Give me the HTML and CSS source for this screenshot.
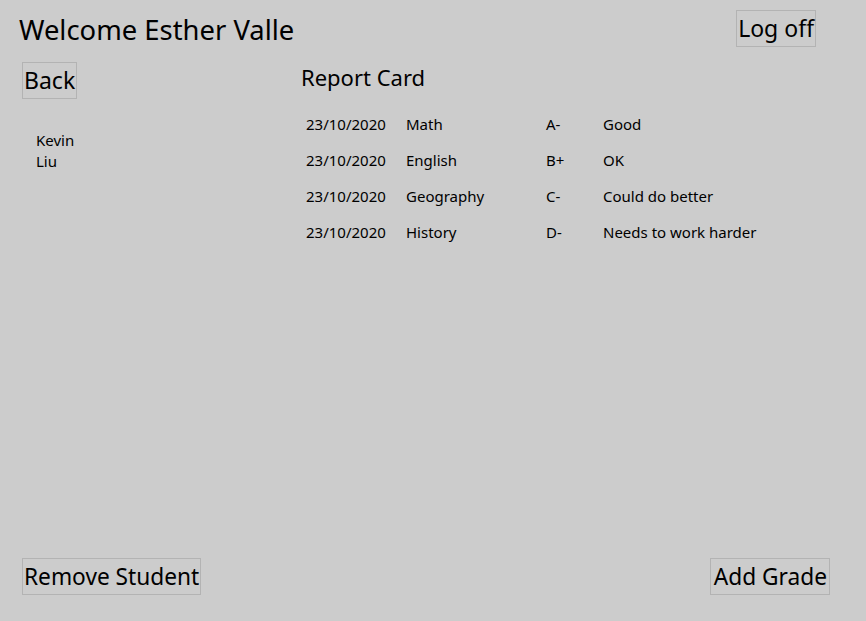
FILE: index.html
```html
<!DOCTYPE html>
<html>
<head>
<meta charset="utf-8">
<link rel="stylesheet" href="styles.css">
</head>
<body>
<div class="page">
  <header class="header">
    <h1 class="title">Welcome Esther Valle</h1>
    <button class="btn btn-logoff">Log off</button>
  </header>
  <main class="main">
    <aside class="side">
      <button class="btn">Back</button>
      <div class="student">Kevin<br>Liu</div>
    </aside>
    <section class="report">
      <h2 class="report-title">Report Card</h2>
      <div class="grades">
        <div class="row"><span class="c-date">23/10/2020</span><span class="c-subj">Math</span><span class="c-grade">A-</span><span class="c-note">Good</span></div>
        <div class="row"><span class="c-date">23/10/2020</span><span class="c-subj">English</span><span class="c-grade">B+</span><span class="c-note">OK</span></div>
        <div class="row"><span class="c-date">23/10/2020</span><span class="c-subj">Geography</span><span class="c-grade">C-</span><span class="c-note">Could do better</span></div>
        <div class="row"><span class="c-date">23/10/2020</span><span class="c-subj">History</span><span class="c-grade">D-</span><span class="c-note">Needs to work harder</span></div>
      </div>
    </section>
  </main>
  <footer class="footer">
    <button class="btn">Remove Student</button>
    <button class="btn btn-add">Add Grade</button>
  </footer>
</div>
</body>
</html>
```

FILE: styles.css
```css
html, body {
  margin: 0;
  padding: 0;
  background: #cccccc;
}
body {
  font-family: "Noto Sans", "Open Sans", sans-serif;
  color: #000;
}
.page {
  width: 866px;
  height: 621px;
  display: flex;
  flex-direction: column;
  box-sizing: border-box;
}
.header {
  display: flex;
  justify-content: space-between;
  align-items: flex-start;
  padding: 10px 50px 0 19px;
}
.title {
  margin: 4px 0 0 0;
  font-size: 27.4px;
  font-weight: normal;
  line-height: 32px;
}
.btn {
  font-family: inherit;
  font-size: 23px;
  line-height: 33px;
  height: 37px;
  padding: 0 1px;
  margin: 0;
  background: transparent;
  border: 1px solid #b3b3b3;
  color: #000;
}
.main {
  flex: 1;
  display: grid;
  grid-template-columns: 279px 1fr;
  padding: 15px 0 0 22px;
}
.side {
  display: flex;
  flex-direction: column;
  align-items: flex-start;
}
.student {
  margin: 31px 0 0 14px;
  font-size: 15px;
  line-height: 21px;
}
.report-title {
  margin: 1px 0 0 0;
  font-size: 22px;
  font-weight: normal;
  line-height: 28px;
}
.grades {
  margin-top: 22px;
  display: flex;
  flex-direction: column;
  gap: 14px;
  font-size: 15px;
  line-height: 22px;
}
.row {
  display: grid;
  grid-template-columns: 100px 140px 57px auto;
  padding-left: 5px;
}
.footer {
  display: flex;
  justify-content: space-between;
  padding: 0 36px 26px 22px;
}
.footer .btn {
  font-size: 22.7px;
}
.footer .btn-add {
  padding: 0 2px 0 3px;
}
```
